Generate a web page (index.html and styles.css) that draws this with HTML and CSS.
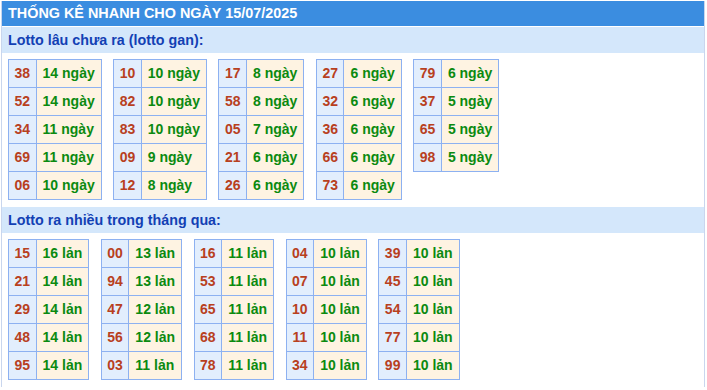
FILE: index.html
```html
<!DOCTYPE html>
<html lang="vi">
<head>
<meta charset="utf-8">
<title>Thống kê nhanh</title>
<link rel="stylesheet" href="styles.css">
</head>
<body>
<div class="box">
  <div class="title">THỐNG KÊ NHANH CHO NGÀY 15/07/2025</div>

  <div class="section-head">Lotto lâu chưa ra (lotto gan):</div>
  <div class="tables">
    <table class="stat">
      <tr><td class="num">38</td><td class="val">14 ngày</td></tr>
      <tr><td class="num">52</td><td class="val">14 ngày</td></tr>
      <tr><td class="num">34</td><td class="val">11 ngày</td></tr>
      <tr><td class="num">69</td><td class="val">11 ngày</td></tr>
      <tr><td class="num">06</td><td class="val">10 ngày</td></tr>
    </table>
    <table class="stat">
      <tr><td class="num">10</td><td class="val">10 ngày</td></tr>
      <tr><td class="num">82</td><td class="val">10 ngày</td></tr>
      <tr><td class="num">83</td><td class="val">10 ngày</td></tr>
      <tr><td class="num">09</td><td class="val">9 ngày</td></tr>
      <tr><td class="num">12</td><td class="val">8 ngày</td></tr>
    </table>
    <table class="stat">
      <tr><td class="num">17</td><td class="val">8 ngày</td></tr>
      <tr><td class="num">58</td><td class="val">8 ngày</td></tr>
      <tr><td class="num">05</td><td class="val">7 ngày</td></tr>
      <tr><td class="num">21</td><td class="val">6 ngày</td></tr>
      <tr><td class="num">26</td><td class="val">6 ngày</td></tr>
    </table>
    <table class="stat">
      <tr><td class="num">27</td><td class="val">6 ngày</td></tr>
      <tr><td class="num">32</td><td class="val">6 ngày</td></tr>
      <tr><td class="num">36</td><td class="val">6 ngày</td></tr>
      <tr><td class="num">66</td><td class="val">6 ngày</td></tr>
      <tr><td class="num">73</td><td class="val">6 ngày</td></tr>
    </table>
    <table class="stat">
      <tr><td class="num">79</td><td class="val">6 ngày</td></tr>
      <tr><td class="num">37</td><td class="val">5 ngày</td></tr>
      <tr><td class="num">65</td><td class="val">5 ngày</td></tr>
      <tr><td class="num">98</td><td class="val">5 ngày</td></tr>
    </table>
  </div>

  <div class="section-head">Lotto ra nhiều trong tháng qua:</div>
  <div class="tables">
    <table class="stat">
      <tr><td class="num">15</td><td class="val">16 lản</td></tr>
      <tr><td class="num">21</td><td class="val">14 lản</td></tr>
      <tr><td class="num">29</td><td class="val">14 lản</td></tr>
      <tr><td class="num">48</td><td class="val">14 lản</td></tr>
      <tr><td class="num">95</td><td class="val">14 lản</td></tr>
    </table>
    <table class="stat">
      <tr><td class="num">00</td><td class="val">13 lản</td></tr>
      <tr><td class="num">94</td><td class="val">13 lản</td></tr>
      <tr><td class="num">47</td><td class="val">12 lản</td></tr>
      <tr><td class="num">56</td><td class="val">12 lản</td></tr>
      <tr><td class="num">03</td><td class="val">11 lản</td></tr>
    </table>
    <table class="stat">
      <tr><td class="num">16</td><td class="val">11 lản</td></tr>
      <tr><td class="num">53</td><td class="val">11 lản</td></tr>
      <tr><td class="num">65</td><td class="val">11 lản</td></tr>
      <tr><td class="num">68</td><td class="val">11 lản</td></tr>
      <tr><td class="num">78</td><td class="val">11 lản</td></tr>
    </table>
    <table class="stat">
      <tr><td class="num">04</td><td class="val">10 lản</td></tr>
      <tr><td class="num">07</td><td class="val">10 lản</td></tr>
      <tr><td class="num">10</td><td class="val">10 lản</td></tr>
      <tr><td class="num">11</td><td class="val">10 lản</td></tr>
      <tr><td class="num">34</td><td class="val">10 lản</td></tr>
    </table>
    <table class="stat">
      <tr><td class="num">39</td><td class="val">10 lản</td></tr>
      <tr><td class="num">45</td><td class="val">10 lản</td></tr>
      <tr><td class="num">54</td><td class="val">10 lản</td></tr>
      <tr><td class="num">77</td><td class="val">10 lản</td></tr>
      <tr><td class="num">99</td><td class="val">10 lản</td></tr>
    </table>
  </div>
</div>
</body>
</html>
```
FILE: styles.css
```css
html, body {
  margin: 0;
  padding: 0;
  background: #fff;
}

body {
  font-family: "Liberation Sans", Arial, sans-serif;
  font-size: 14px;
  font-weight: bold;
}

.box {
  margin: 1px 2px 0 1px;
  border-left: 1px solid #c9d6ee;
  border-right: 1px solid #c9d6ee;
}

.title {
  background: #3b8de0;
  color: #fff;
  height: 25px;
  line-height: 25px;
  padding-left: 6px;
  font-size: 14.4px;
  margin-bottom: 1px;
}

.section-head {
  background: #d4e7fb;
  color: #1240b4;
  height: 26px;
  line-height: 26px;
  padding-left: 6px;
  font-size: 14.3px;
}

.tables {
  display: flex;
  align-items: flex-start;
  gap: 11.5px;
  padding: 6px 6px 7px 6px;
}

.stat {
  border-collapse: collapse;
}

.stat td {
  border: 1px solid #8db1f1;
  height: 27px;
  line-height: 27px;
  white-space: nowrap;
}

.num {
  background: #e2eefd;
  color: #b8401e;
  text-align: center;
  padding: 0 5.5px;
}

.val {
  background: #fef3e2;
  color: #0b8a10;
  padding: 0 6px;
}
```
